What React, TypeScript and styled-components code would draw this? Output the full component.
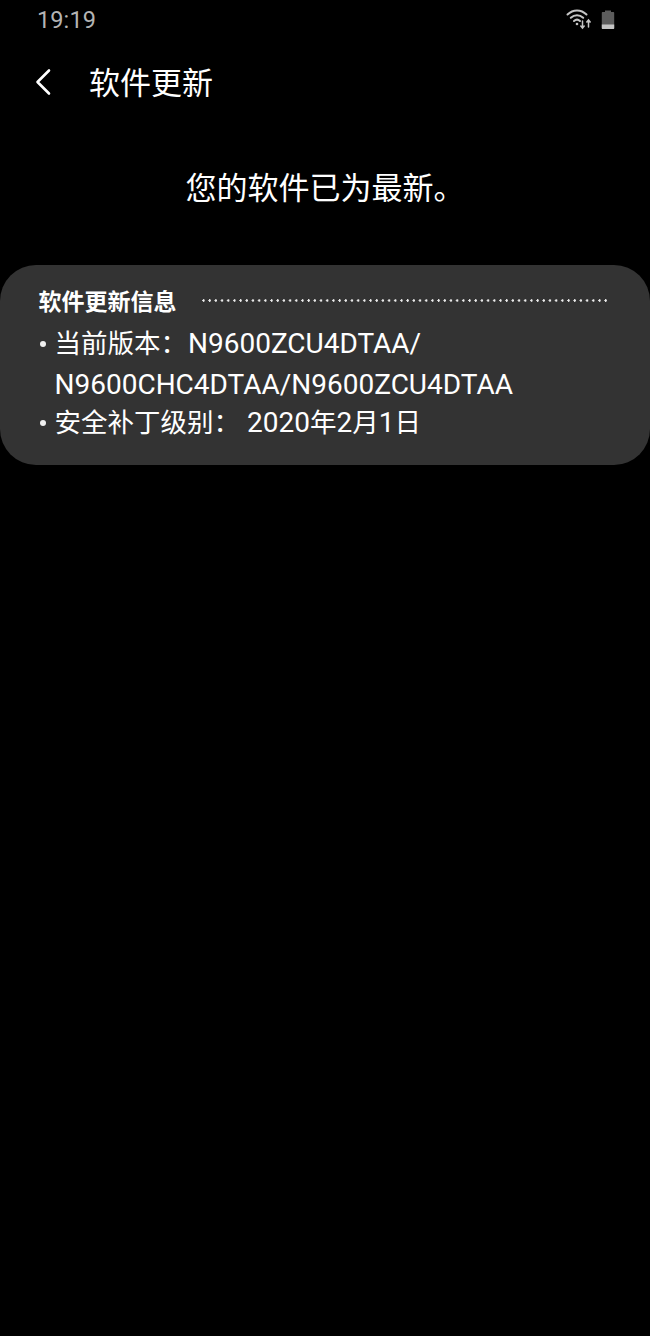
import React from "react";
import styled, { createGlobalStyle } from "styled-components";

const GlobalStyle = createGlobalStyle`
  html, body {
    margin: 0;
    padding: 0;
    background: #000;
  }
  body {
    font-family: Roboto, "Noto Sans CJK SC", sans-serif;
  }
`;

const Screen = styled.div`
  width: 650px;
  height: 1336px;
  background: #000;
  color: #fff;
  overflow: hidden;
  display: flex;
  flex-direction: column;
`;

const StatusBar = styled.div`
  height: 40px;
  padding: 0 35px 2px 37px;
  box-sizing: border-box;
  display: flex;
  align-items: center;
  justify-content: space-between;
  color: #b4b4b4;
`;

const Time = styled.span`
  font-size: 23.5px;
  letter-spacing: 0.1px;
  margin-top: 2px;
`;

const StatusIcons = styled.div`
  display: flex;
  align-items: center;
  gap: 9px;
`;

const Header = styled.header`
  height: 88px;
  padding: 0 0 4px 34px;
  display: flex;
  align-items: center;
  gap: 35px;
  box-sizing: border-box;
`;

const BackIcon = styled.svg`
  width: 20px;
  height: 28px;
  flex: none;
`;

const Title = styled.h1`
  margin: -3px 0 0;
  font-size: 31px;
  font-weight: 400;
`;

const Message = styled.p`
  margin: 0;
  height: 137px;
  padding-top: 41px;
  box-sizing: border-box;
  font-size: 31px;
  line-height: 40px;
  text-align: center;
`;

const Card = styled.section`
  height: 200px;
  background: #333;
  border-radius: 36px;
  padding: 21px 39px 0 38.5px;
  box-sizing: border-box;
`;

const CardHead = styled.div`
  display: flex;
  align-items: center;
  gap: 25px;
  height: 28px;
  margin-bottom: 9px;
`;

const CardTitle = styled.h2`
  margin: 0;
  font-size: 23px;
  font-weight: 700;
  flex: none;
`;

const Dots = styled.div`
  flex: 1;
  height: 3px;
  margin-right: 2px;
  background-image: radial-gradient(circle at 1.5px 1.5px, #ececec 1px, transparent 1.4px);
  background-size: 6.2px 3px;
  background-repeat: repeat-x;
`;

const InfoList = styled.ul`
  margin: 0;
  padding: 0;
  list-style: none;
`;

const InfoItem = styled.li`
  position: relative;
  padding-left: 16px;
  font-size: 26.5px;
  line-height: 41px;
  & + & {
    margin-top: -3px;
  }
  &::before {
    content: "";
    position: absolute;
    left: 1px;
    top: 18px;
    width: 6px;
    height: 6px;
    border-radius: 50%;
    background: #f0f0f0;
  }
`;

const Latin = styled.span`
  font-size: 28px;
`;

const Version = styled(Latin)`
  margin-left: 1px;
`;

const DateValue = styled.span`
  margin-left: 7px;
`;

const WifiIcon = () => (
  <svg width="26" height="22" viewBox="0 0 26 22" fill="none" stroke="#c4c4c4" strokeLinecap="round">
    <path d="M1.5 6.5C7 1 15 1 20.5 6.5" strokeWidth="2" />
    <path d="M4.8 9.8C8.5 6.3 13.5 6.3 17.2 9.8" strokeWidth="2" />
    <path d="M8 13C9.8 11.4 12.2 11.4 14 13" strokeWidth="2" />
    <circle cx="11" cy="16" r="1.3" fill="#c4c4c4" stroke="none" />
    <path d="M16.5 13v7M14.8 18l1.7 2 1.7-2" strokeWidth="1.5" />
    <path d="M22.5 19v-7M20.8 14l1.7-2 1.7 2" strokeWidth="1.5" />
  </svg>
);

const BatteryIcon = () => (
  <svg width="14" height="20" viewBox="0 0 14 20">
    <path d="M4 1.5h6V3h2.2c.6 0 1 .4 1 1v15c0 .6-.4 1-1 1H1.8c-.6 0-1-.4-1-1V4c0-.6.4-1 1-1H4z" fill="#5c5c5c" />
    <path d="M.8 15.5h12.4V19c0 .6-.4 1-1 1H1.8c-.6 0-1-.4-1-1z" fill="#c4c4c4" />
  </svg>
);

const App = () => {
  return (
    <Screen>
      <GlobalStyle />
      <StatusBar>
        <Time>19:19</Time>
        <StatusIcons>
          <WifiIcon />
          <BatteryIcon />
        </StatusIcons>
      </StatusBar>
      <Header>
        <BackIcon viewBox="0 0 20 28" fill="none" stroke="#fff" strokeWidth="2.6" strokeLinecap="round" strokeLinejoin="round">
          <path d="M15 2.5L3.5 14L15 25.5" />
        </BackIcon>
        <Title>软件更新</Title>
      </Header>
      <Message>您的软件已为最新。</Message>
      <Card>
        <CardHead>
          <CardTitle>软件更新信息</CardTitle>
          <Dots />
        </CardHead>
        <InfoList>
          <InfoItem>
            当前版本：<Version>N9600ZCU4DTAA/</Version>
            <br />
            <Latin>N9600CHC4DTAA/N9600ZCU4DTAA</Latin>
          </InfoItem>
          <InfoItem>
            安全补丁级别：
            <DateValue>
              <Latin>2020</Latin>年<Latin>2</Latin>月<Latin>1</Latin>日
            </DateValue>
          </InfoItem>
        </InfoList>
      </Card>
    </Screen>
  );
};

export default App;
